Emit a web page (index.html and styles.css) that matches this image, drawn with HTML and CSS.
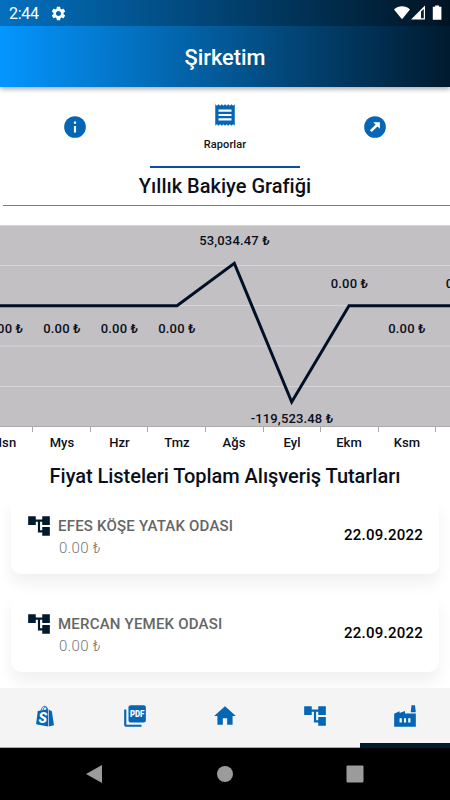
FILE: index.html
```
<!DOCTYPE html>
<html lang="tr">
<head>
  <meta charset="UTF-8">
  <meta name="viewport" content="width=device-width, initial-scale=1.0">
  <title>Şirketim</title>
  <link rel="stylesheet" href="styles.css">
</head>
<body>
  <svg class="sprite">
    <symbol id="tree" viewBox="0 0 24 24">
      <path d="M22 11V3h-7v3H9V3H2v8h7V8h2v10h4v3h7v-8h-7v3h-2V8h2v3z"/>
    </symbol>
  </svg>

  <header class="header">
    <div class="status-bar">
      <span class="clock">2:44</span>
      <svg class="gear" viewBox="0 0 24 24"><path d="M19.14 12.94c.04-.3.06-.61.06-.94 0-.32-.02-.64-.07-.94l2.03-1.58c.18-.14.23-.41.12-.61l-1.92-3.32c-.12-.22-.37-.29-.59-.22l-2.39.96c-.5-.38-1.03-.7-1.62-.94l-.36-2.54c-.04-.24-.24-.41-.48-.41h-3.84c-.24 0-.43.17-.47.41l-.36 2.54c-.59.24-1.13.57-1.62.94l-2.39-.96c-.22-.08-.47 0-.59.22L2.74 8.87c-.12.21-.08.47.12.61l2.03 1.58c-.05.3-.09.63-.09.94s.02.64.07.94l-2.03 1.58c-.18.14-.23.41-.12.61l1.92 3.32c.12.22.37.29.59.22l2.39-.96c.5.38 1.03.7 1.62.94l.36 2.54c.05.24.24.41.48.41h3.84c.24 0 .44-.17.47-.41l.36-2.54c.59-.24 1.13-.56 1.62-.94l2.39.96c.22.08.47 0 .59-.22l1.92-3.32c.12-.22.07-.47-.12-.61l-2.01-1.58zM12 15.6c-1.98 0-3.6-1.62-3.6-3.6s1.62-3.6 3.6-3.6 3.6 1.62 3.6 3.6-1.62 3.6-3.6 3.6z"/></svg>
      <svg class="signals" viewBox="0 0 50 16">
        <path d="M1 4.400C5.500.1 12.500.1 17 4.400L9 14.200z"/>
        <path d="M18 14.500L32 .500v14z"/>
        <path class="signal-gap" d="M28 6.600L30.800 4v9.300H28z"/>
        <path d="M39.800 1.800h2.300V.500h4v1.300h2.300v12.900h-8.600z"/>
      </svg>
    </div>
    <h1>Şirketim</h1>
  </header>

  <nav class="tabs">
    <div class="tab">
      <svg class="icon" viewBox="0 0 24 24">
        <circle cx="12" cy="12" r="10"/>
        <path class="cut" d="M11 7h2v2h-2zM11 11h2v6h-2z"/>
      </svg>
    </div>
    <div class="tab active">
      <svg class="icon" viewBox="0 0 24 24"><path d="M18 17H6v-2h12v2zm0-4H6v-2h12v2zm0-4H6V7h12v2zM3 22l1.500-1.500L6 22l1.500-1.500L9 22l1.500-1.500L12 22l1.500-1.500L15 22l1.500-1.500L18 22l1.500-1.500L21 22V2l-1.500 1.500L18 2l-1.500 1.500L15 2l-1.500 1.500L12 2l-1.500 1.500L9 2 7.500 3.500 6 2 4.500 3.500 3 2v20z"/></svg>
      <span>Raporlar</span>
    </div>
    <div class="tab">
      <svg class="icon" viewBox="0 0 24 24">
        <circle cx="12" cy="12" r="10"/>
        <path class="cut" d="M16.500 7.500v6.200l-2.200-2.200-5.300 5.200-1.700-1.700 5.300-5.200-2.300-2.300z"/>
      </svg>
    </div>
  </nav>

  <main class="content">
    <h2 class="chart-title">Yıllık Bakiye Grafiği</h2>

    <svg class="chart" viewBox="0 225 450 230">
      <rect class="plot" x="0" y="225" width="450" height="202"/>
      <path class="grid" d="M0 225.500H450M0 265.500H450M0 305.500H450M0 346H450M0 386.500H450"/>
      <path class="axis" d="M0 426.500H450M32.500 427v5M90.500 427v5M147.500 427v5M205.500 427v5M263.500 427v5M320.500 427v5M378.500 427v5M435.500 427v5"/>
      <polyline class="line" points="-2,305.700 177,305.700 234.300,263.300 291.700,402 349,305.700 452,305.700"/>
      <g class="values">
        <text x="4.500" y="333">0.00 ₺</text>
        <text x="62" y="333">0.00 ₺</text>
        <text x="119.500" y="333">0.00 ₺</text>
        <text x="177" y="333">0.00 ₺</text>
        <text x="234.500" y="244.500">53,034.47 ₺</text>
        <text x="292" y="423">-119,523.48 ₺</text>
        <text x="349.500" y="287.500">0.00 ₺</text>
        <text x="407" y="333">0.00 ₺</text>
        <text x="464.500" y="287.500">0.00 ₺</text>
      </g>
      <g class="months">
        <text x="4.500" y="447">Hsn</text>
        <text x="62" y="447">Mys</text>
        <text x="119.500" y="447">Hzr</text>
        <text x="177" y="447">Tmz</text>
        <text x="234" y="447">Ağs</text>
        <text x="292" y="447">Eyl</text>
        <text x="349" y="447">Ekm</text>
        <text x="407" y="447">Ksm</text>
      </g>
    </svg>

    <h2 class="list-title">Fiyat Listeleri Toplam Alışveriş Tutarları</h2>

    <div class="price-list">
      <div class="card">
        <svg class="icon"><use href="#tree"/></svg>
        <div class="card-content">
          <h3>EFES KÖŞE YATAK ODASI</h3>
          <p>0.00 ₺</p>
        </div>
        <span class="date">22.09.2022</span>
      </div>
      <div class="card">
        <svg class="icon"><use href="#tree"/></svg>
        <div class="card-content">
          <h3>MERCAN YEMEK ODASI</h3>
          <p>0.00 ₺</p>
        </div>
        <span class="date">22.09.2022</span>
      </div>
    </div>
  </main>

  <nav class="bottom-nav">
    <div class="nav-item">
      <svg class="icon" viewBox="0 0 24 24">
        <path d="M5.300 7.300L14.800 5.800V21.700L3.800 19.600zM15.400 5.900l2.900 1.700L20.300 20.500 15.400 21.600z"/>
        <path class="handle" d="M8.300 7.200C8.800 4.500 10.200 3 11.400 3c1.400 0 2.100 1.300 2.200 3.400M10.200 6.600C10.700 4.200 12 3.100 13 3.500c.9.400 1.200 1.300 1.400 2.300"/>
        <text class="bag-letter" x="10" y="18.300">S</text>
      </svg>
    </div>
    <div class="nav-item">
      <svg class="icon" viewBox="0 0 24 24">
        <rect x="6" y="2" width="16" height="16" rx="2"/>
        <path d="M4 6H2v14c0 1.100.9 2 2 2h14v-2H4z"/>
        <text class="pdf" x="14" y="13" textLength="13.400" lengthAdjust="spacingAndGlyphs">PDF</text>
      </svg>
    </div>
    <div class="nav-item">
      <svg class="icon" viewBox="0 0 24 24"><path d="M10 20v-6h4v6h5v-8h3L12 3 2 12h3v8z"/></svg>
    </div>
    <div class="nav-item">
      <svg class="icon"><use href="#tree"/></svg>
    </div>
    <div class="nav-item active">
      <svg class="icon" viewBox="0 0 24 24">
        <path d="M2 22V10l5-2.300v1.600l5-2v2.500h10V22zM17.300 8.500L18 2h3.200l.8 6.500z"/>
        <path class="cut" d="M7 14h2v4H7zM11 14h2v4h-2zM15 14h2v4h-2z"/>
      </svg>
    </div>
  </nav>

  <footer class="system-bar">
    <svg viewBox="0 0 20 20"><path d="M2 10L18 1v18z"/></svg>
    <svg viewBox="0 0 20 20"><circle cx="10" cy="10" r="8"/></svg>
    <svg viewBox="0 0 20 20"><rect x="1.500" y="1.500" width="17" height="17" rx="1"/></svg>
  </footer>
</body>
</html>
```

FILE: styles.css
```
* {
  box-sizing: border-box;
}

body {
  font-family: Roboto, sans-serif;
  margin: 0;
  width: 450px;
  height: 800px;
  overflow: hidden;
  display: flex;
  flex-direction: column;
  background-color: #fff;
}

h1,
h2,
h3,
p {
  margin: 0;
  font-weight: 500;
}

.sprite {
  display: none;
}

.icon {
  width: 26px;
  height: 26px;
  fill: #0466b4;
  flex: none;
}

.icon .cut {
  fill: #fff;
}

/* Header */
.header {
  height: 87px;
  flex: none;
  background: linear-gradient(to right, #0496ff, #035896 50%, #001a2e);
  box-shadow: 0 2px 5px rgba(0, 0, 0, 0.35);
  color: #fff;
  text-align: center;
}

.status-bar {
  display: flex;
  align-items: center;
  height: 26px;
  padding: 0 7px 0 9px;
  background-color: rgba(0, 0, 0, 0.25);
}

.clock {
  font-size: 16px;
  letter-spacing: -0.3px;
  margin-top: 1px;
}

.status-bar svg {
  fill: #fff;
}

.gear {
  width: 17px;
  height: 17px;
  margin-left: 11px;
}

.signals {
  width: 50px;
  height: 16px;
  margin-left: auto;
}

.signals .signal-gap {
  fill: #04223a;
}

.header h1 {
  font-size: 21.8px;
  line-height: 63px;
}

/* Tabs */
.tabs {
  display: grid;
  grid-template-columns: repeat(3, 1fr);
  height: 81px;
  flex: none;
}

.tab {
  display: flex;
  flex-direction: column;
  align-items: center;
  justify-content: center;
  border-bottom: 2px solid transparent;
}

.tab.active {
  justify-content: flex-start;
  padding-top: 15px;
  border-color: #0b4fa5;
}

.tab span {
  margin-top: 10px;
  font-size: 11px;
  font-weight: 500;
  line-height: 14px;
  letter-spacing: 0.1px;
  color: #111;
}

/* Chart */
.content {
  flex: 1;
  min-height: 0;
  overflow: hidden;
}

.chart-title,
.list-title {
  font-size: 20px;
  text-align: center;
  color: #0a0f1c;
}

.chart-title {
  height: 38px;
  margin-left: 3px;
  padding-right: 3px;
  line-height: 36px;
  border-bottom: 1px solid #708490;
}

.chart {
  display: block;
  width: 450px;
  height: 230px;
  margin-top: 19px;
}

.plot {
  fill: #c2c0c3;
}

.grid {
  stroke: #d6d6d8;
}

.axis {
  stroke: #aaa;
}

.line {
  fill: none;
  stroke: #001027;
  stroke-width: 3;
}

.chart text {
  font-size: 13px;
  font-weight: 500;
  text-anchor: middle;
  fill: #0a0f1c;
}

.values {
  letter-spacing: 0.15px;
}

.months {
  letter-spacing: 0.1px;
}

/* Price list */
.list-title {
  height: 41px;
  line-height: 42px;
  letter-spacing: -0.04px;
}

.price-list {
  display: flex;
  flex-direction: column;
  gap: 20px;
  padding: 0 11px;
}

.card {
  display: flex;
  height: 78px;
  flex: none;
  padding: 17px 16px 0 15px;
  border-radius: 10px;
  background-color: #fff;
  box-shadow: 0 10px 15px rgba(0, 0, 0, 0.06);
}

.card .icon {
  fill: #001a2e;
}

.card-content {
  flex: 1;
  margin: 3px 0 0 6px;
}

.card h3 {
  font-size: 15px;
  line-height: 20px;
  letter-spacing: 0.2px;
  color: #666;
}

.card p {
  margin-left: 1px;
  font-size: 15px;
  font-weight: 300;
  line-height: 24px;
  letter-spacing: 0.3px;
  color: #777;
}

.date {
  margin-top: 12px;
  font-size: 15px;
  font-weight: 500;
  line-height: 20px;
  letter-spacing: 0.25px;
  color: #000;
}

/* Bottom navigation */
.bottom-nav {
  display: grid;
  grid-template-columns: repeat(5, 1fr);
  height: 60px;
  flex: none;
  background-color: #f4f4f4;
}

.nav-item {
  display: flex;
  justify-content: center;
  padding-top: 14.5px;
  border-bottom: 1px solid #aaa;
}

.nav-item.active {
  border-bottom: 5px solid #001a2e;
}

.nav-item .handle {
  fill: none;
  stroke: #0466b4;
  stroke-width: 0.8;
}

.bag-letter {
  font-size: 13px;
  font-weight: 900;
  font-style: italic;
  text-anchor: middle;
  fill: #fff;
}

.pdf {
  font-size: 8.5px;
  font-weight: 900;
  text-anchor: middle;
  fill: #fff;
}

/* Android buttons */
.system-bar {
  display: flex;
  justify-content: space-between;
  align-items: center;
  height: 52px;
  flex: none;
  padding: 0 85px 0 84px;
  background-color: #000;
}

.system-bar svg {
  width: 20px;
  height: 20px;
  fill: #9b9b9b;
}
```
